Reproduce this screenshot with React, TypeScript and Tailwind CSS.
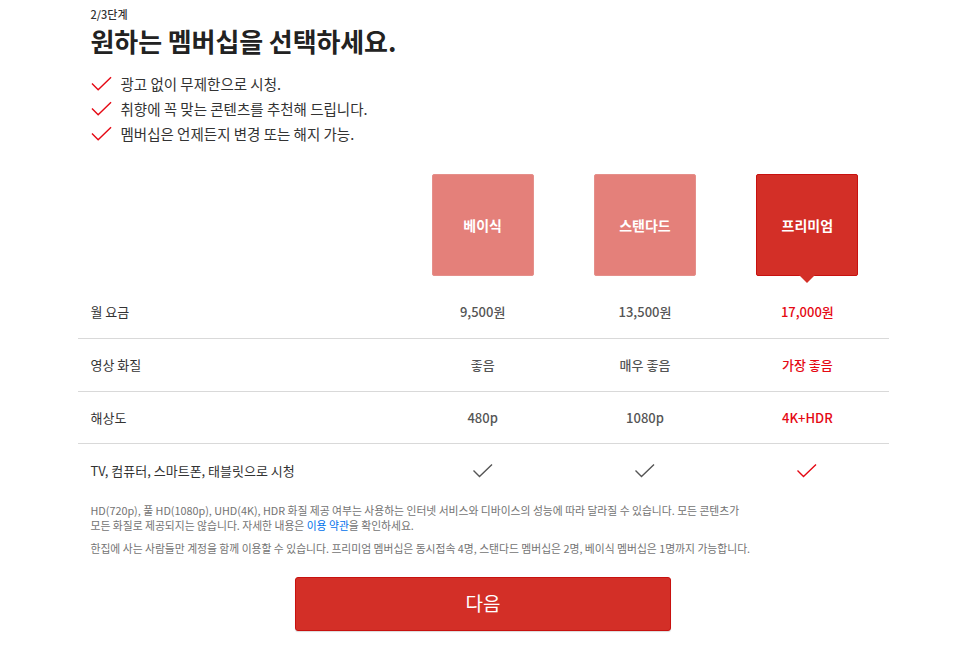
import React from "react";

const font = { fontFamily: '"Noto Sans CJK KR", "Noto Sans", "Liberation Sans", sans-serif' };

function Check({ className = "", w = 22, h = 15 }: { className?: string; w?: number; h?: number }) {
  return (
    <svg width={w} height={h} viewBox="0 0 22 15" className={className} fill="none">
      <path d="M1 7.5 L7.5 14 L21 1" stroke="currentColor" strokeWidth="1.5" />
    </svg>
  );
}

function TableCheck({ red }: { red?: boolean }) {
  return (
    <svg width="22" height="15" viewBox="0 0 22 15" fill="none" className={red ? "text-[#e50914]" : "text-[#555555]"}>
      <path d="M1.5 7.5 L7.5 13.5 L20 1.5" stroke="currentColor" strokeWidth="1.4" />
    </svg>
  );
}

const rows: { label: string; values: React.ReactNode[] }[] = [
  { label: "월 요금", values: ["9,500원", "13,500원", "17,000원"] },
  { label: "영상 화질", values: ["좋음", "매우 좋음", "가장 좋음"] },
  { label: "해상도", values: ["480p", "1080p", "4K+HDR"] },
  {
    label: "TV, 컴퓨터, 스마트폰, 태블릿으로 시청",
    values: [<TableCheck key="a" />, <TableCheck key="b" />, <TableCheck key="c" red />],
  },
];

export default function App() {
  return (
    <div className="min-h-[645px] w-full bg-white text-[#333333]" style={font}>
      <div className="mx-auto w-[811px] pt-[6px]">
        <div className="px-[13px]">
          <div className="text-[11px] font-medium leading-[16px] text-[#333333]">2/3단계</div>
          <h1 className="mt-[2px] text-[26px] font-bold leading-[34px] tracking-[-0.1px] text-[#222222]">
            원하는 멤버십을 선택하세요.
          </h1>
          <ul className="mt-[13px] flex flex-col">
            {["광고 없이 무제한으로 시청.", "취향에 꼭 맞는 콘텐츠를 추천해 드립니다.", "멤버십은 언제든지 변경 또는 해지 가능."].map((t) => (
              <li key={t} className="flex h-[25px] items-center">
                <Check className="mr-[9px] text-[#e50914]" w={21} h={15} />
                <span className="text-[14.5px] leading-[25px] text-[#333333]">{t}</span>
              </li>
            ))}
          </ul>
        </div>

        <div className="mt-[28px] grid grid-cols-[324px_1fr_1fr_1fr]">
          <div />
          {["베이식", "스탠다드", "프리미엄"].map((p, i) => (
            <div key={p} className="flex justify-center">
              <div
                className={
                  "relative flex h-[102px] w-[102px] items-center justify-center rounded-[2px] text-[14px] font-bold text-white " +
                  (i === 2 ? "border border-[#c8110f] bg-[#d32f27]" : "border border-[#e58f8a] bg-[#e4807a]")
                }
              >
                {p}
                {i === 2 && (
                  <div className="absolute left-1/2 top-full h-0 w-0 -translate-x-1/2 border-x-[8px] border-t-[8px] border-x-transparent border-t-[#d32f27]" />
                )}
              </div>
            </div>
          ))}
        </div>

        <div className="mt-[10px]">
          {rows.map((r, ri) => (
            <div
              key={r.label}
              className={
                "grid h-[52.5px] grid-cols-[324px_1fr_1fr_1fr] items-center " +
                (ri === 0 ? "h-[53px] " : "") +
                (ri < rows.length - 1 ? "border-b border-[#d9d9d9]" : "")
              }
            >
              <div className="pl-[13px] text-[13px] text-[#333333]">{r.label}</div>
              {r.values.map((v, i) => (
                <div
                  key={i}
                  className={
                    "flex justify-center text-[13px] font-medium " + (i === 2 ? "text-[#e50914]" : "text-[#555555]")
                  }
                >
                  {v}
                </div>
              ))}
            </div>
          ))}
        </div>

        <div className="mt-[6px] px-[13px] text-[10.8px] leading-[15px] text-[#737373]">
          <p className="whitespace-nowrap">
            HD(720p), 풀 HD(1080p), UHD(4K), HDR 화질 제공 여부는 사용하는 인터넷 서비스와 디바이스의 성능에 따라 달라질 수 있습니다. 모든 콘텐츠가
            <br />
            모든 화질로 제공되지는 않습니다. 자세한 내용은 <span className="text-[#0071eb]">이용 약관</span>을 확인하세요.
          </p>
          <p className="mt-[8px] whitespace-nowrap">
            한집에 사는 사람들만 계정을 함께 이용할 수 있습니다. 프리미엄 멤버십은 동시접속 4명, 스탠다드 멤버십은 2명, 베이식 멤버십은 1명까지 가능합니다.
          </p>
        </div>

        <div className="mt-[21px] flex justify-center">
          <button className="flex h-[54px] w-[376px] items-center justify-center rounded-[3px] border border-[#c8110f] bg-[#d32f27] text-[19px] text-white shadow-[0_1px_1px_rgba(0,0,0,0.15)]">
            다음
          </button>
        </div>
      </div>
    </div>
  );
}
